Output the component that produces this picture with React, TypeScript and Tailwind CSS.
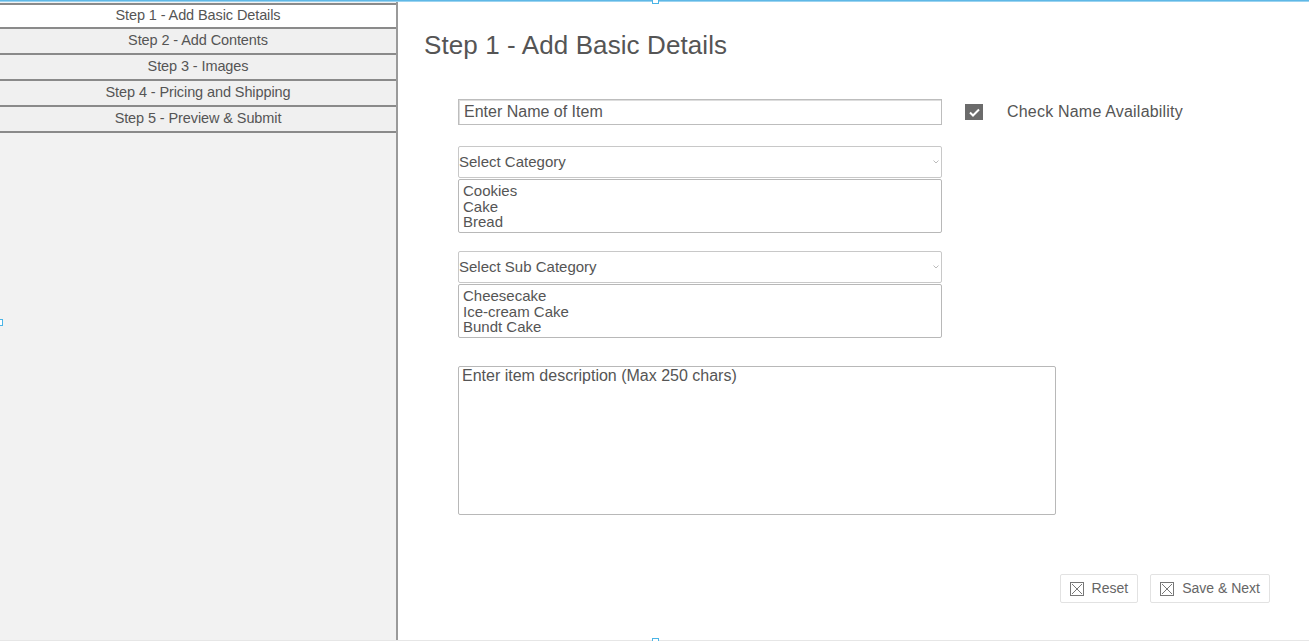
import React from 'react';

const steps = [
  'Step 1 - Add Basic Details',
  'Step 2 - Add Contents',
  'Step 3 - Images',
  'Step 4 - Pricing and Shipping',
  'Step 5 - Preview & Submit',
];

function BoxX() {
  return (
    <svg width="14" height="14" viewBox="0 0 14 14" className="shrink-0">
      <rect x="0.5" y="0.5" width="13" height="13" fill="none" stroke="#777" strokeWidth="1" />
      <path d="M2 2 L12 12 M12 2 L2 12" stroke="#777" strokeWidth="1" />
    </svg>
  );
}

function Chevron() {
  return (
    <svg width="6" height="4" viewBox="0 0 6 4">
      <path d="M0.5 0.5 L3 3 L5.5 0.5" fill="none" stroke="#bbb" strokeWidth="1" />
    </svg>
  );
}

export default function App() {
  return (
    <div className="relative h-[641px] w-[1309px] bg-white font-['Liberation_Sans',Arial,sans-serif] text-[#555] overflow-hidden">
      {/* top frame line */}
      <div className="h-[2px] bg-[#5fb8e6] border-b border-[#9bd3f0]" />

      <div className="flex h-[638px]">
        {/* Sidebar */}
        <div className="w-[398px] shrink-0 bg-[#f2f2f2] border-r-[2px] border-[#9a9a9a] flex flex-col pt-px">
          {steps.map((s, i) => (
            <div
              key={s}
              className={`h-[26px] flex items-center justify-center text-[14.5px] tracking-[-0.1px] border-b-[2px] border-[#8a8a8a] ${i === 0 ? 'bg-white border-t-[2px]' : 'bg-[#f0f0f0]'}`}
            >
              {s}
            </div>
          ))}
        </div>

        {/* Main */}
        <div className="flex-1 flex flex-col pl-[26px] pt-[29px]">
          <h1 className="text-[26px] leading-[28px] tracking-[0.1px]">Step 1 - Add Basic Details</h1>

          <div className="pl-[34px] mt-[40px] flex flex-col">
            <div className="flex items-center">
              <div className="w-[484px] h-[26px] border border-[#bdbdbd] shadow-[inset_1px_1px_0_#ddd] flex items-center px-[5px] text-[16px]">
                Enter Name of Item
              </div>
              <div className="ml-[23px] w-[18px] h-[16px] bg-[#6b6b6b] flex items-center justify-center">
                <svg width="11" height="9" viewBox="0 0 11 9">
                  <path d="M1 4.5 L4 7.5 L10 1.5" fill="none" stroke="#fff" strokeWidth="2" />
                </svg>
              </div>
              <span className="ml-[24px] text-[16px] tracking-[0.2px]">Check Name Availability</span>
            </div>

            <div className="mt-[21px] w-[484px] h-[32px] border border-[#c8c8c8] rounded-[2px] flex items-center justify-between pr-[2px] text-[15px]">
              <span>Select Category</span>
              <Chevron />
            </div>
            <div className="mt-px w-[484px] h-[54px] border border-[#b8b8b8] rounded-[2px] px-[4px] pt-[3px] text-[15px] leading-[15.5px] flex flex-col">
              <span>Cookies</span>
              <span>Cake</span>
              <span>Bread</span>
            </div>

            <div className="mt-[18px] w-[484px] h-[32px] border border-[#c8c8c8] rounded-[2px] flex items-center justify-between pr-[2px] text-[15px]">
              <span>Select Sub Category</span>
              <Chevron />
            </div>
            <div className="mt-px w-[484px] h-[54px] border border-[#b8b8b8] rounded-[2px] px-[4px] pt-[3px] text-[15px] leading-[15.5px] flex flex-col">
              <span>Cheesecake</span>
              <span>Ice-cream Cake</span>
              <span>Bundt Cake</span>
            </div>

            <div className="mt-[28px] w-[598px] h-[149px] border border-[#b8b8b8] rounded-[2px] px-[3px] pt-0 text-[16px] leading-[18px]">
              Enter item description (Max 250 chars)
            </div>
          </div>

          <div className="mt-[59px] flex justify-end gap-[12px] w-[846px]">
            <div className="h-[29px] px-[9px] border border-[#e2e2e2] rounded-[2px] flex items-center gap-[8px] text-[14px] text-[#666]">
              <BoxX />
              <span>Reset</span>
            </div>
            <div className="h-[29px] px-[9px] border border-[#e2e2e2] rounded-[2px] flex items-center gap-[8px] text-[14px] text-[#666]">
              <BoxX />
              <span>Save &amp; Next</span>
            </div>
          </div>
        </div>
      </div>

      {/* bottom line */}
      <div className="h-px bg-[#e6e6e6]" />

      {/* selection handles */}
      <div className="absolute left-[652px] top-[-3px] w-[7px] h-[7px] border border-[#4ab4e6] bg-white" />
      <div className="absolute left-[-4px] top-[319px] w-[7px] h-[7px] border border-[#4ab4e6] bg-white" />
      <div className="absolute left-[652px] top-[638px] w-[7px] h-[7px] border border-[#4ab4e6] bg-white" />
    </div>
  );
}
